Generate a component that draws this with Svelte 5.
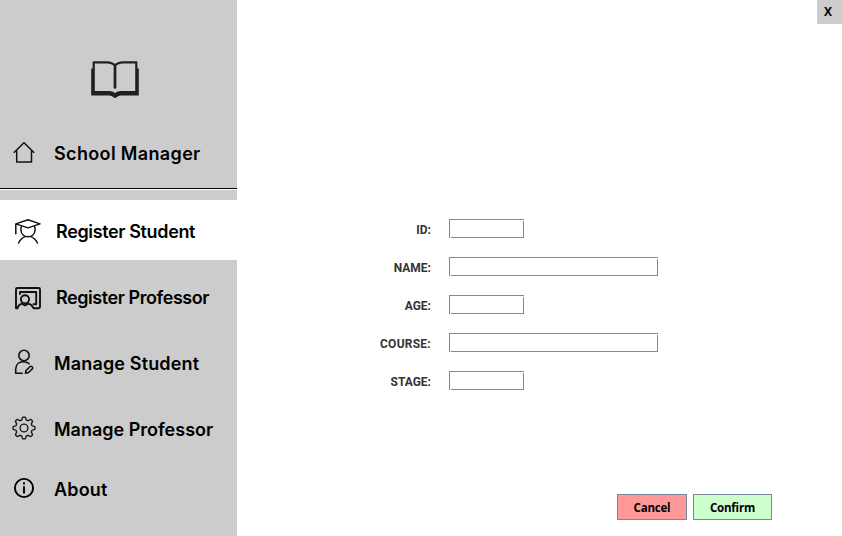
<script>
  const items = [
    { id: 'student', label: 'Register Student' },
    { id: 'professor', label: 'Register Professor' },
    { id: 'manage', label: 'Manage Student' },
    { id: 'gear', label: 'Manage Professor' },
    { id: 'about', label: 'About' }
  ];
  const fields = [
    { label: 'ID:', wide: false },
    { label: 'NAME:', wide: true },
    { label: 'AGE:', wide: false },
    { label: 'COURSE:', wide: true },
    { label: 'STAGE:', wide: false }
  ];
  const gear = (() => {
    let d = '';
    const n = 8;
    for (let i = 0; i < n * 12; i++) {
      const a = (i / (n * 12)) * Math.PI * 2;
      const c = Math.cos(n * a);
      const r = 9.6 + 1.35 * Math.tanh(2.6 * c) / Math.tanh(2.6);
      d += (i ? 'L' : 'M') + (12 + r * Math.sin(a)).toFixed(2) + ' ' + (12 - r * Math.cos(a)).toFixed(2);
    }
    return d + 'Z';
  })();
</script>

<div class="window">
  <aside>
    <header>
      <svg class="book" width="50" height="40" viewBox="0 0 50 40">
        <path d="M3.700 2.300H17Q22 2.300 25 5.500Q28 2.300 33 2.300H46.300V32H31Q27 32 25 34.500Q23 32 19 32H3.700Z" fill="none" stroke="#231f20" stroke-width="2.200" stroke-linejoin="round" />
        <path d="M1.200 8.500H3.700V32H19Q23 32 25 34.500Q27 32 31 32H46.300V8.500H48.800V35.500H30.500Q28.500 35.500 25 38.300Q21.500 35.500 19.500 35.500H1.200Z" fill="#231f20" />
        <path d="M25 5V27.500" stroke="#231f20" stroke-width="2.700" stroke-linecap="round" />
      </svg>
    </header>
    <div class="brand">
      <svg width="24" height="24" viewBox="0 0 24 24" fill="none" stroke="#111" stroke-width="1.500">
        <path d="M1.800 12.700L12 2.700L22.200 12.700M4.700 10.500V22H19.500V10.500" stroke-linejoin="round" />
      </svg>
      <span>School Manager</span>
    </div>
    <nav>
      {#each items as item}
        <div class="item {item.id}" class:active={item.id === 'student'}>
          <span class="icon">
            {#if item.id === 'student'}
              <svg width="28" height="30" viewBox="0 -1 28 30" fill="none" stroke="#111" stroke-width="1.500" stroke-linecap="round" stroke-linejoin="round">
                <path d="M1.800 7.900L14 3.700L26 7.900L14 11.900ZM1.800 7.900V17.800M7.700 10C6.800 11.300 6.800 12.500 6.900 14C7.200 18 10 20.700 14 20.700S20.800 18 21.100 14C21.200 12.500 21.200 11.300 20.300 10M4.500 27Q7 22 11.200 20.600M16.800 20.600Q21 22 23.500 27" />
              </svg>
            {:else if item.id === 'professor'}
              <svg width="28" height="30" viewBox="0 0 28 30" fill="none" stroke="#111" stroke-width="1.900" stroke-linecap="round" stroke-linejoin="round">
                <path d="M2 27.200V8.200Q2 7 3.200 7H24.800Q26 7 26 8.200V26Q26 27.200 24.800 27.200H19.500Q17.500 23 14.200 22.600L11 24.500L7.800 22.600Q4.500 23.500 3.500 27.200Z" />
                <path d="M6 13V11H22.200V23.300H19.500" />
                <circle cx="11" cy="18.300" r="4.100" />
              </svg>
            {:else if item.id === 'manage'}
              <svg width="28" height="28" viewBox="0 0 28 28" fill="none" stroke="#111" stroke-width="1.600" stroke-linecap="round" stroke-linejoin="round">
                <circle cx="12" cy="7.500" r="5.200" />
                <path d="M10.200 25.200H3.700V21.500C3.700 17 6.500 13.800 11 13.800C13.500 13.800 15.500 14.300 17 15.700M17.200 19.500Q18.700 17.400 20.100 18.800T19.600 21.500L16.500 24.500L13.500 25.300L14 22.500Z" />
              </svg>
            {:else if item.id === 'gear'}
              <svg width="24" height="24" viewBox="0 0 24 24" fill="none" stroke="#1a1a1a" stroke-width="1.400" stroke-linejoin="round">
                <path d={gear} />
                <circle cx="12" cy="12" r="3.900" />
              </svg>
            {:else}
              <svg width="24" height="24" viewBox="0 0 24 24" fill="none" stroke="#000" stroke-width="1.900">
                <circle cx="12" cy="12" r="9.100" />
                <path d="M12 10.200V17.500M12 6.300V8.400" />
              </svg>
            {/if}
          </span>
          <span class="label">{item.label}</span>
        </div>
      {/each}
    </nav>
  </aside>
  <main>
    <button class="close">X</button>
    <form>
      {#each fields as f}
        <div class="row">
          <label for={f.label} class:course={f.label === 'COURSE:'}>{f.label}</label>
          <span class="field" class:wide={f.wide}><input id={f.label} /></span>
        </div>
      {/each}
    </form>
    <div class="actions">
      <button class="cancel">Cancel</button>
      <button class="confirm">Confirm</button>
    </div>
  </main>
</div>

<style>
  :global(body) { background: #fff; overflow: hidden; }
  .window { display: flex; width: 842px; height: 536px; background: #fff; }
  aside { width: 237px; height: 536px; background: #ccc; overflow: hidden; font: 600 18px/24px Inter, sans-serif; color: #000; }
  svg { display: block; flex: none; }
  header { height: 120px; box-sizing: border-box; padding: 60px 0 0 90px; }
  .brand { height: 68px; box-sizing: border-box; display: flex; padding: 20px 0 0 12px; }
  .brand span { margin: 2px 0 0 18px; letter-spacing: .35px; }
  nav { border-top: 1px solid #000; box-shadow: inset 0 1px #fff; padding-top: 11px; }
  .item { display: flex; align-items: center; height: 60px; white-space: nowrap; }
  .active { background: #fff; }
  .icon { width: 54px; box-sizing: border-box; padding-left: 12px; flex: none; }
  .label { padding-top: 3px; }
  .student, .professor, .manage { margin-bottom: 6px; }
  .student .icon, .professor .icon { width: 56px; padding-left: 14px; }
  .student .label { letter-spacing: -.36px; }
  .professor .label { letter-spacing: -.44px; }
  .manage .label { letter-spacing: .15px; }
  .about .label { letter-spacing: .15px; }
  main { width: 605px; display: flex; flex-direction: column; }
  button { padding: 0; margin: 0; font: bold 12px/14px "Open Sans", "Noto Sans", sans-serif; color: #000; border-radius: 0; }
  .close { align-self: flex-end; width: 25px; height: 24px; border: 0; background: #ccc; padding-right: 3px; }
  form { margin-top: 195px; display: flex; flex-direction: column; gap: 19px; }
  .row { display: flex; height: 19px; }
  label { width: 194px; text-align: right; font: bold 12px/23px Roboto, sans-serif; color: #333; }
  .course { letter-spacing: .25px; }
  .field { position: relative; box-sizing: border-box; width: 75px; height: 19px; margin-left: 18px; border: 1px solid #7a8a99; }
  .field.wide { width: 209px; }
  .field::before, .field::after { content: ''; position: absolute; width: 1px; height: 1px; background: #fff; }
  .field::before { left: 0; bottom: -1px; }
  .field::after { right: -1px; top: 0; }
  input { display: block; width: 100%; height: 100%; box-sizing: border-box; border: 0; padding: 0 2px; background: #fff; outline: 0; font: 12px Roboto, sans-serif; }
  .actions { display: flex; gap: 6px; margin: 104px 0 0 380px; }
  .actions button { height: 26px; border: 1px solid #7a8a99; padding-top: 1px; font-size: 11.5px; letter-spacing: -.2px; }
  .cancel { width: 70px; background: #f99; }
  .confirm { width: 79px; background: #cfc; }
</style>
